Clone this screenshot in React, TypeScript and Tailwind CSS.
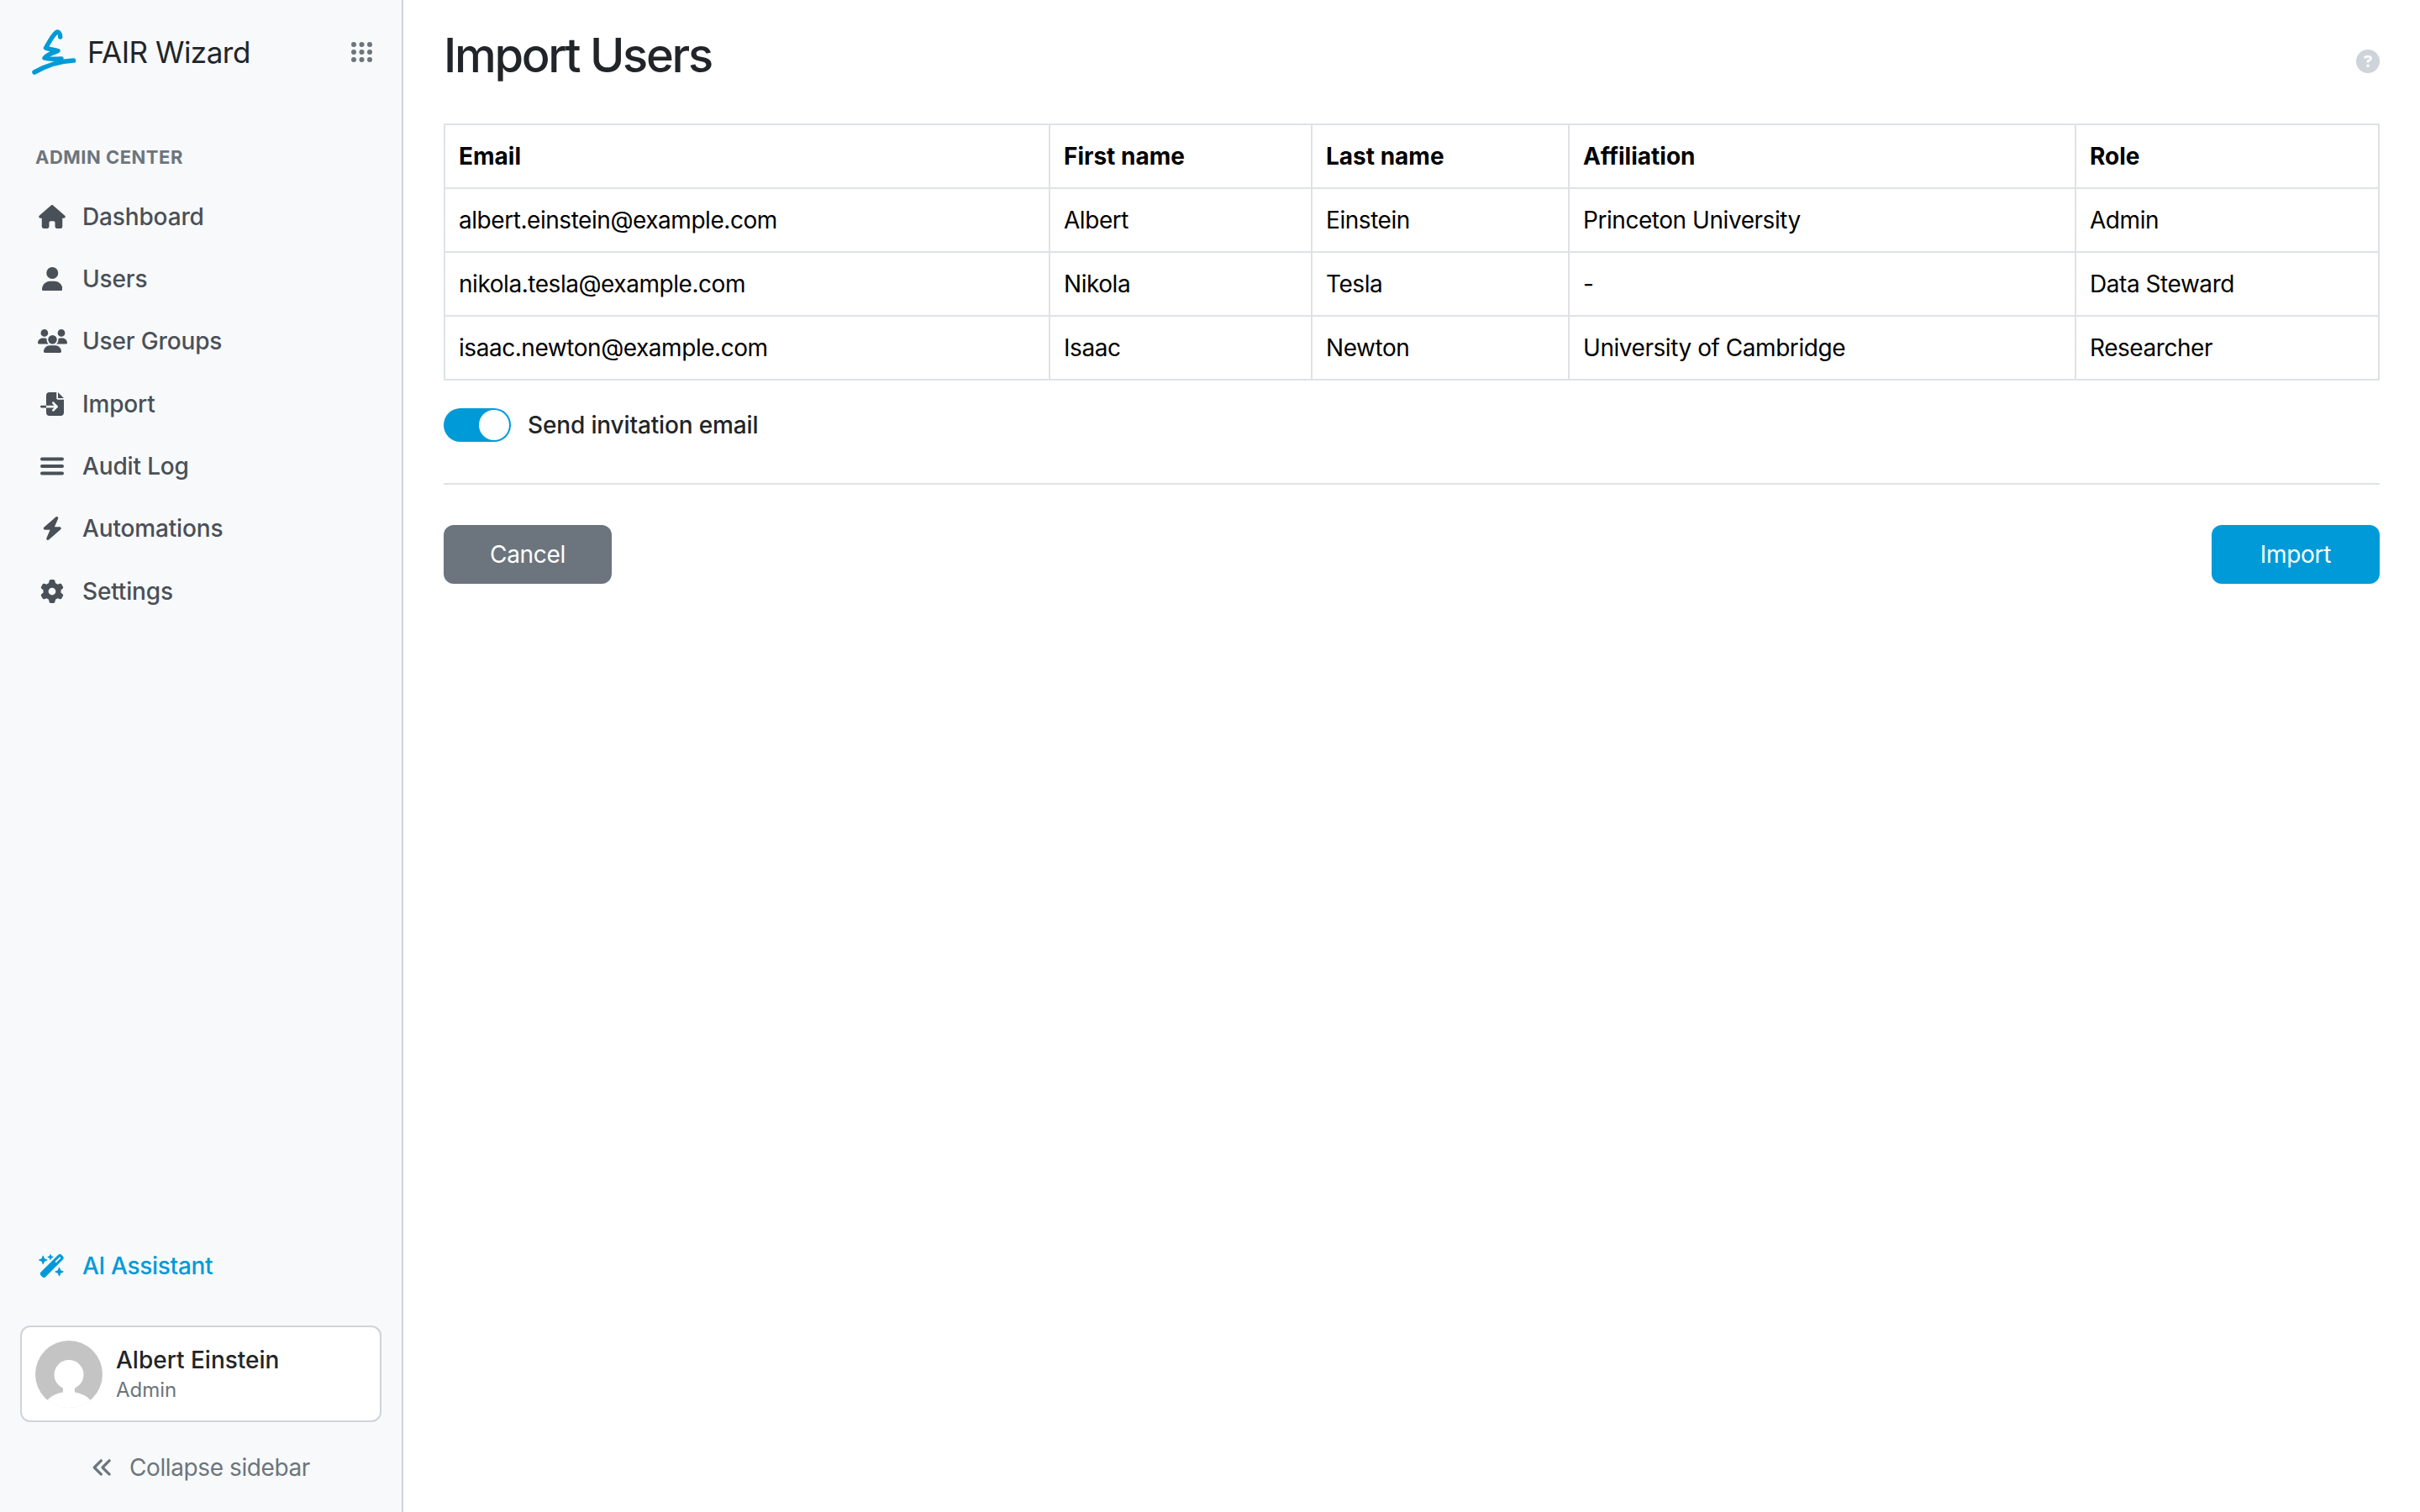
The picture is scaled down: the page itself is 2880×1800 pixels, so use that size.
import { ReactNode } from "react";
import {
  FaHouse,
  FaUser,
  FaUsers,
  FaFileImport,
  FaBolt,
  FaGear,
  FaWandMagicSparkles,
  FaAnglesLeft,
  FaCircleQuestion,
} from "react-icons/fa6";

const USERS = [
  ["albert.einstein@example.com", "Albert", "Einstein", "Princeton University", "Admin"],
  ["nikola.tesla@example.com", "Nikola", "Tesla", "-", "Data Steward"],
  ["isaac.newton@example.com", "Isaac", "Newton", "University of Cambridge", "Researcher"],
];

const HEADERS = ["Email", "First name", "Last name", "Affiliation", "Role"];

const Lines = () => (
  <svg viewBox="0 0 28 22" className="w-[28px] h-[22px]" fill="none" stroke="currentColor" strokeWidth="4" strokeLinecap="round">
    <path d="M2 2.5H26M2 11H26M2 19.5H26" />
  </svg>
);

const NAV: { label: string; icon: ReactNode }[] = [
  { label: "Dashboard", icon: <FaHouse className="w-[32px] h-[28px]" /> },
  { label: "Users", icon: <FaUser className="w-[24.5px] h-[28px]" /> },
  { label: "User Groups", icon: <FaUsers className="w-[35px] h-[28px]" /> },
  { label: "Import", icon: <FaFileImport className="w-[28px] h-[28px]" /> },
  { label: "Audit Log", icon: <Lines /> },
  { label: "Automations", icon: <FaBolt className="w-[24.5px] h-[28px]" /> },
  { label: "Settings", icon: <FaGear className="w-[28px] h-[28px]" /> },
];

const Logo = () => (
  <svg viewBox="0 0 60 60" className="w-[60px] h-[60px] text-[#009ad8]" fill="none" stroke="currentColor" strokeLinecap="round" strokeLinejoin="round">
    <path d="M38.7 12C38.5 7 36 4.5 33.5 7C29 11 25 19 21.5 25C26 27 31 27 36 28.5C29 31 23 33 20 37C26 39 33 38 40 38" strokeWidth="5.4" />
    <path d="M54.5 40C42 40.5 24 45 8 54" strokeWidth="5.6" />
  </svg>
);

const Grid = () => (
  <svg viewBox="0 0 25 24" className="w-[25px] h-[24px] text-[#6c757d]" fill="currentColor">
    {[3, 12.5, 22].map((x) =>
      [3, 12, 21].map((y) => <circle key={`${x}-${y}`} cx={x} cy={y} r="3" />)
    )}
  </svg>
);

const Avatar = () => (
  <svg viewBox="0 0 80 80" className="w-[80px] h-[80px] shrink-0">
    <circle cx="40" cy="40" r="40" fill="#c4c4c4" />
    <circle cx="40" cy="40.5" r="17.5" fill="#fff" />
    <path d="M33 52H47V63H33Z" fill="#fff" />
    <path d="M14.5 71C20 64 30 61 40 61C50 61 60 64 65.5 71C58 77 50 80 40 80C30 80 22 77 14.5 71Z" fill="#fff" />
  </svg>
);

const App = () => {
  return (
    <div className="flex h-screen bg-white font-[Inter,sans-serif] text-[28px] text-[#212529]">
      <aside className="flex flex-col w-[480px] shrink-0 border-r-2 border-[#ced4da] bg-[#f8f9fb]">
        <div className="flex items-center h-[124px] pl-[33px] pr-[35px]">
          <Logo />
          <span className="ml-[11px] text-[35px] leading-none tracking-[-0.5px]">FAIR Wizard</span>
          <span className="ml-auto">
            <Grid />
          </span>
        </div>
        <div className="mt-[47px] h-[32px] pl-[42px] flex items-center text-[22px] font-bold text-[#6c757d] tracking-[0.5px]">
          ADMIN CENTER
        </div>
        <nav className="mt-[17.5px] flex flex-col">
          {NAV.map((item) => (
            <div key={item.label} className="flex items-center h-[74.33px] pl-[42px] font-medium text-[#495057] tracking-[-0.15px]">
              <span className="flex justify-center w-[40px] mr-[16px]">{item.icon}</span>
              {item.label}
            </div>
          ))}
        </nav>
        <div className="mt-auto flex items-center h-[74px] pl-[42px] font-medium text-[#009ad8] tracking-[-0.3px]">
          <span className="flex justify-center w-[40px] mr-[16px]">
            <FaWandMagicSparkles className="w-[31.5px] h-[28px]" />
          </span>
          AI Assistant
        </div>
        <div className="flex items-center mt-[34px] mx-[24px] h-[115px] px-[16px] gap-[16px] rounded-[12px] border-2 border-[#ced4da] bg-white">
          <Avatar />
          <div className="flex flex-col">
            <span className="font-medium leading-[38px]">Albert Einstein</span>
            <span className="text-[24px] leading-[34px] text-[#6c757d]">Admin</span>
          </div>
        </div>
        <div className="flex items-center justify-center h-[107px] gap-[19px] text-[#6c757d] tracking-[-0.4px]">
          <FaAnglesLeft className="w-[26px] h-[30px]" />
          <span>Collapse sidebar</span>
        </div>
      </aside>
      <main className="flex-1 px-[48px]">
        <div className="flex items-start justify-between h-[147px]">
          <h1 className="mt-[33px] text-[56px] leading-[66px] font-medium tracking-[-2.3px]">Import Users</h1>
          <FaCircleQuestion className="mt-[59px] w-[28px] h-[28px] text-[#ced4da]" />
        </div>
        <table className="w-full table-fixed border-collapse text-black">
          <colgroup>
            <col className="w-[720px]" />
            <col className="w-[312px]" />
            <col className="w-[306px]" />
            <col className="w-[603px]" />
            <col />
          </colgroup>
          <thead>
            <tr>
              {HEADERS.map((h) => (
                <th key={h} className="h-[76px] px-[16px] border-2 border-[#dee2e6] text-left font-bold">
                  {h}
                </th>
              ))}
            </tr>
          </thead>
          <tbody>
            {USERS.map((row) => (
              <tr key={row[0]}>
                {row.map((cell, i) => (
                  <td key={i} className="h-[76px] px-[16px] border-2 border-[#dee2e6] tracking-[-0.45px]">
                    {cell}
                  </td>
                ))}
              </tr>
            ))}
          </tbody>
        </table>
        <div className="flex items-center mt-[33px] h-[40px] gap-[20px]">
          <div className="flex justify-end items-center w-[80px] h-[40px] p-[2px] rounded-full bg-[#009ad8]">
            <div className="w-[36px] h-[36px] rounded-full bg-white" />
          </div>
          <span className="font-medium tracking-[-0.15px]">Send invitation email</span>
        </div>
        <hr className="mt-[49px] border-t-2 border-[#dee2e6]" />
        <div className="flex justify-between mt-[48px]">
          <button className="w-[200px] h-[70px] rounded-[12px] bg-[#6c757d] text-white tracking-[-0.3px]">Cancel</button>
          <button className="w-[200px] h-[70px] rounded-[12px] bg-[#009ad8] text-white tracking-[-0.3px]">Import</button>
        </div>
      </main>
    </div>
  );
};

export default App;
